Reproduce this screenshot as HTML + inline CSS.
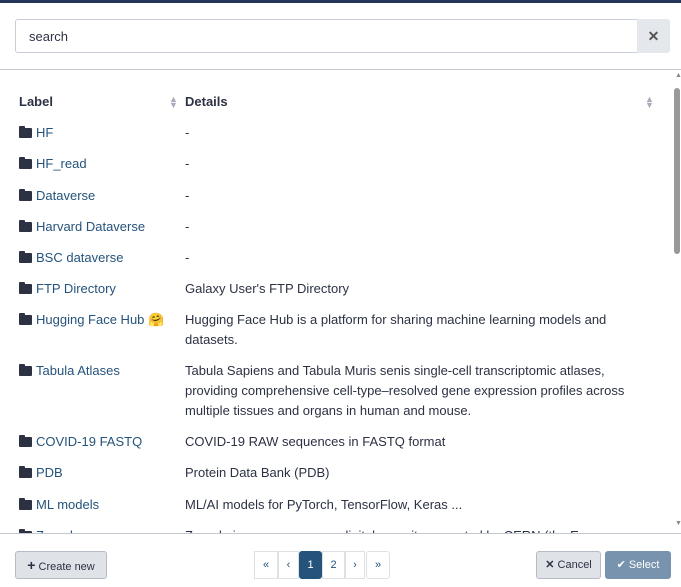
<!DOCTYPE html><html><head><style>
body{margin:0;width:681px;height:587px;overflow:hidden;background:#fff;font-family:"Liberation Sans",sans-serif;font-size:13px;color:#2c3143;position:relative}
.top{position:absolute;left:0;top:0;width:681px;height:3px;background:#25355a}
.inp{position:absolute;left:15px;top:19px;width:608px;height:32px;border:1px solid #c8ced6;border-radius:3px 0 0 3px;padding-left:13px;line-height:33px;color:#2c3143}
.xb{position:absolute;left:637px;top:19px;width:33px;height:34px;background:#e4e7eb;border-radius:0 3px 3px 0;text-align:center;line-height:34px;font-weight:bold;color:#555;font-size:14px}
.sep{position:absolute;left:0;top:69px;width:681px;height:1px;background:#c3c8d0}
.sep2{position:absolute;left:0;top:533px;width:681px;height:1px;background:#c3c8d0}
.clip{position:absolute;left:0;top:71px;width:681px;height:462px;overflow:hidden}
.r{position:absolute;left:0;width:670px;line-height:20px}
.l{position:absolute;left:19px;color:#25537b}
.d{position:absolute;left:185px;width:470px}
.f{display:inline-block;width:13px;height:10px;background:#2c3143;border-radius:1px;margin-right:4px;vertical-align:-1px;position:relative}
.f:before{content:"";position:absolute;left:0;top:-2px;width:6px;height:3px;background:#2c3143;border-radius:1px 1px 0 0}
.h{font-weight:bold}
.sort{position:absolute;color:#aab;font-size:9px;line-height:6px}
.sb{position:absolute;left:674px;top:88px;width:6px;height:166px;background:#999;border-radius:3px}
.btn{position:absolute;top:551px;height:28px;border:1px solid #b5bcc6;border-radius:3px;background:#dfe2e7;line-height:27px;font-size:11px;text-align:center;box-sizing:border-box}
.pg{position:absolute;top:551px;height:28px;border:1px solid #dde1e6;line-height:26px;text-align:center;font-size:11px;color:#25537b;box-sizing:border-box;background:#fff}
</style></head><body>
<div class="top"></div>
<div class="inp">search</div><div class="xb">✕</div>
<div class="sep"></div>
<div class="clip">
<div class="r h" style="top:21px"><span style="position:absolute;left:19px">Label</span><span style="position:absolute;left:185px">Details</span></div>
<div class="sort" style="left:169px;top:25px">▲<br>▼</div>
<div class="sort" style="left:645px;top:25px">▲<br>▼</div>
<div class="r" style="top:52px"><span class="l"><i class="f"></i>HF</span><span class="d">-</span></div>
<div class="r" style="top:83px"><span class="l"><i class="f"></i>HF_read</span><span class="d">-</span></div>
<div class="r" style="top:115px"><span class="l"><i class="f"></i>Dataverse</span><span class="d">-</span></div>
<div class="r" style="top:146px"><span class="l"><i class="f"></i>Harvard Dataverse</span><span class="d">-</span></div>
<div class="r" style="top:177px"><span class="l"><i class="f"></i>BSC dataverse</span><span class="d">-</span></div>
<div class="r" style="top:208px"><span class="l"><i class="f"></i>FTP Directory</span><span class="d">Galaxy User's FTP Directory</span></div>
<div class="r" style="top:239px"><span class="l"><i class="f"></i>Hugging Face Hub 🤗</span><span class="d">Hugging Face Hub is a platform for sharing machine learning models and datasets.</span></div>
<div class="r" style="top:290px"><span class="l"><i class="f"></i>Tabula Atlases</span><span class="d">Tabula Sapiens and Tabula Muris senis single-cell transcriptomic atlases, providing comprehensive cell-type–resolved gene expression profiles across multiple tissues and organs in human and mouse.</span></div>
<div class="r" style="top:361px"><span class="l"><i class="f"></i>COVID-19 FASTQ</span><span class="d">COVID-19 RAW sequences in FASTQ format</span></div>
<div class="r" style="top:392px"><span class="l"><i class="f"></i>PDB</span><span class="d">Protein Data Bank (PDB)</span></div>
<div class="r" style="top:424px"><span class="l"><i class="f"></i>ML models</span><span class="d">ML/AI models for PyTorch, TensorFlow, Keras ...</span></div>
<div class="r" style="top:455px"><span class="l"><i class="f"></i>Zenodo</span><span class="d">Zenodo is an open-access digital repository created by CERN (the European</span></div>
</div>
<div class="sb"></div>
<div style="position:absolute;left:675px;top:72px;font-size:7px;color:#888">▲</div>
<div style="position:absolute;left:675px;top:520px;font-size:7px;color:#888">▼</div>
<div class="sep2"></div>
<div class="btn" style="left:15px;width:92px"><b style="font-size:14px">+</b> Create new</div>
<div class="pg" style="left:254px;width:24px">«</div>
<div class="pg" style="left:278px;width:21px">‹</div>
<div class="pg" style="left:299px;width:23px;background:#25537b;color:#fff;border-color:#25537b;border-radius:3px">1</div>
<div class="pg" style="left:322px;width:23px">2</div>
<div class="pg" style="left:345px;width:20px">›</div>
<div class="pg" style="left:366px;width:24px;border-radius:3px">»</div>
<div class="btn" style="left:536px;width:65px"><b>✕</b> Cancel</div>
<div class="btn" style="left:605px;width:66px;background:#7793ad;border-color:#7793ad;color:#fff">✔ Select</div>
</body></html>
